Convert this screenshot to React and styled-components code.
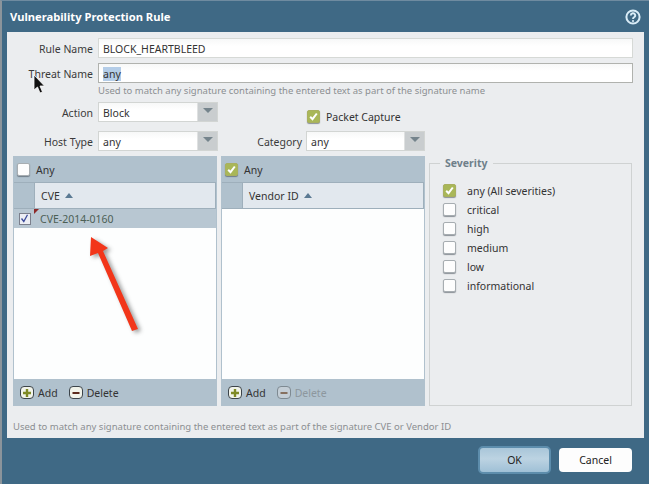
import React from "react";
import styled, { createGlobalStyle, css } from "styled-components";

const Global = createGlobalStyle`
  html, body { margin: 0; padding: 0; background: #3f6985; }
  body { width: 649px; height: 484px; overflow: hidden; font-family: Tahoma, "Noto Sans", "Open Sans", sans-serif; }
`;

const Window = styled.div`
  position: relative;
  width: 649px;
  height: 484px;
  box-sizing: border-box;
  display: flex;
  flex-direction: column;
  background: #3f6985;
  border-left: 2px solid #8b949b;
  border-top: 1px solid #6f8ba0;
  font-size: 10.5px;
  color: #333;
`;
const TitleBar = styled.header`
  height: 31px;
  flex: none;
  display: flex;
  align-items: center;
  justify-content: space-between;
  padding: 0 8px 0 8px;
  color: #fff;
  font-size: 11.2px;
  font-weight: 700;
`;
const Body = styled.main`
  flex: none;
  height: 406px;
  margin: 0 5px 0 5px;
  box-sizing: border-box;
  background: #ebedef;
  padding: 6px 11px 0 6px;
  display: flex;
  flex-direction: column;
`;
const Row = styled.div`
  display: grid;
  grid-template-columns: 80px 1fr;
  column-gap: 5px;
  align-items: center;
  margin-bottom: ${(p) => p.$mb || 0}px;
`;
const Label = styled.label`
  text-align: right;
  color: #3a3a3a;
  white-space: nowrap;
  padding-top: 1px;
`;
const Input = styled.div`
  height: 20px;
  box-sizing: border-box;
  background: linear-gradient(#f7f8f8, #fff 40%);
  border: 1px solid ${(p) => (p.$focus ? "#b0b2ae" : "#d6d9d6")};
  padding: 1px 4px 0;
  display: flex;
  align-items: center;
  color: #333;
`;
const Selected = styled.span`
  background: #b4cde8;
`;
const Hint = styled.div`
  color: #8b8f92;
  font-size: 9.5px;
  line-height: 14px;
  white-space: nowrap;
`;
const HintIndent = styled(Hint)`
  margin: 1px 0 4px 85px;
`;
const FootHint = styled(Hint)`
  margin-top: 14px;
`;
const SelectRows = styled.div`
  display: grid;
  grid-template-columns: 85px 120px 88px 119px;
  grid-template-rows: 20px 20px;
  row-gap: 9px;
  align-items: center;
`;
const SelectLabel = styled(Label)`
  grid-column: ${(p) => p.$col};
  grid-row: ${(p) => p.$row};
  padding-right: ${(p) => p.$pad || 5}px;
`;
const SelectBox = styled.div`
  grid-column: ${(p) => p.$col};
  grid-row: ${(p) => p.$row};
  height: 20px;
  box-sizing: border-box;
  display: flex;
  border: 1px solid #d2d5d3;
  background: #fff;
`;
const SelectText = styled.span`
  flex: 1;
  padding-left: 4px;
  line-height: 20px;
  background: linear-gradient(#f7f8f8, #fff 40%);
`;
const SelectBtn = styled.span`
  width: 19px;
  background: #c9cdcf;
  border-left: 1px solid #dfe1e1;
  display: flex;
  align-items: center;
  justify-content: center;
`;
const DownTri = styled.i`
  width: 0;
  height: 0;
  margin-top: -3px;
  border-left: 5px solid transparent;
  border-right: 5px solid transparent;
  border-top: 5px solid #75848c;
`;
const PacketCell = styled.div`
  grid-column: 4;
  grid-row: 1;
  display: flex;
  align-items: center;
  gap: 6px;
  padding-left: 1px;
  margin-top: 9px;
  white-space: nowrap;
`;
const Panels = styled.div`
  display: grid;
  grid-template-columns: 204px 204px 203px;
  column-gap: 4px;
  height: 250px;
  margin-top: 5px;
`;
const Panel = styled.section`
  display: flex;
  flex-direction: column;
  background: #fdfefe;
  border: 1px solid #b0c1cd;
  border-width: 0 1px;
`;
const PanelHead = styled.div`
  height: 26px;
  flex: none;
  background: #b0c1cd;
  display: flex;
  align-items: center;
  gap: 6px;
  padding-left: 3px;
  color: #333;
`;
const PanelHeadText = styled.span`
  padding-top: 2px;
`;
const GridHead = styled.div`
  height: 27px;
  flex: none;
  box-sizing: border-box;
  display: flex;
  border: 1px solid #9eafbb;
  border-left: 0;
  border-right: 1px solid #9eafbb;
  background: #e2e8ee;
`;
const GutterCell = styled.span`
  width: 20px;
  background: #b0c1cd;
  border-right: 1px solid #9eafbb;
`;
const HeadCell = styled.span`
  flex: 1;
  display: flex;
  align-items: center;
  gap: 5px;
  padding-left: 6px;
  color: #333;
`;
const UpTri = styled.i`
  width: 0;
  height: 0;
  border-left: 4.5px solid transparent;
  border-right: 4.5px solid transparent;
  border-bottom: 5px solid #5b7a93;
`;
const DataRow = styled.div`
  position: relative;
  height: 19px;
  flex: none;
  display: flex;
  align-items: center;
  background: #b8c7d2;
  color: #4c5f55;
`;
const RowCheckCell = styled.span`
  width: 21px;
  display: flex;
  align-items: center;
  justify-content: center;
`;
const RowCheck = styled.span`
  width: 12px;
  height: 12px;
  box-sizing: border-box;
  border: 1px solid #7b7f8c;
  background: #eceef4;
  display: flex;
  align-items: center;
  justify-content: center;
`;
const Flag = styled.i`
  position: absolute;
  left: 20px;
  top: 0;
  border-top: 5px solid #8d2a2a;
  border-right: 5px solid transparent;
`;
const RowText = styled.span`
  padding-left: 5px;
`;
const Spacer = styled.div`
  flex: 1;
`;
const PanelFoot = styled.div`
  height: 27px;
  flex: none;
  background: #b0c1cd;
  display: flex;
  align-items: center;
  gap: 11px;
  padding: 0 0 0 6px;
`;
const Action = styled.span`
  display: flex;
  align-items: center;
  gap: 4px;
  color: ${(p) => (p.$off ? "#8d979e" : "#333")};
`;
const ActionIcon = styled.span`
  width: 14px;
  height: 13px;
  box-sizing: border-box;
  border: 1px solid ${(p) => (p.$off ? "#7e8a92" : "#3c444a")};
  border-radius: 4px;
  background: ${(p) => (p.$off ? "#c4ced6" : "#f1f3ea")};
  display: flex;
  align-items: center;
  justify-content: center;
`;
const Fieldset = styled.fieldset`
  margin: 2px 0 0;
  padding: 12px 0 0 13px;
  border: 1px solid #cfd2d2;
  min-width: 0;
  box-sizing: border-box;
  height: 248px;
`;
const Legend = styled.legend`
  margin-left: -3px;
  padding: 0 5px;
  color: #6f7f8a;
  font-weight: 700;
  font-size: 10.5px;
  line-height: 11px;
`;
const SevRow = styled.div`
  height: 19px;
  display: flex;
  align-items: center;
  gap: 11px;
`;
const boxBase = css`
  width: 13px;
  height: 13px;
  flex: none;
  box-sizing: border-box;
  border-radius: 2px;
  display: flex;
  align-items: center;
  justify-content: center;
  box-shadow: 0 1px 1px rgba(60, 70, 80, 0.55);
`;
const Box = styled.span`
  ${boxBase}
  background: ${(p) => (p.$on ? "#a9b758" : "#fdfdfd")};
  border: 1px solid ${(p) => (p.$on ? "#a9b05f" : "#a7adb1")};
`;
const Footer = styled.footer`
  flex: 1;
  display: flex;
  align-items: center;
  justify-content: flex-end;
  gap: 8px;
  padding: 0 17px 2px 0;
`;
const OkButton = styled.button`
  width: 73px;
  height: 28px;
  padding: 0;
  border-radius: 5px;
  border: 2px solid #5d8dac;
  background: linear-gradient(#a9c6d9, #bcd3e2 45%, #9fc0d6);
  font: inherit;
  color: #222;
`;
const CancelButton = styled.button`
  width: 73px;
  height: 24px;
  padding: 0;
  border: 0;
  border-radius: 4px;
  background: #fdfdfd;
  font: inherit;
  color: #222;
`;
const ArrowSvg = styled.svg`
  position: absolute;
  left: 85px;
  top: 232px;
  overflow: visible;
  filter: drop-shadow(3px 2px 2px rgba(40, 40, 40, 0.45));
`;
const CursorSvg = styled.svg`
  position: absolute;
  left: 31px;
  top: 74px;
`;

const Check = () => (
  <svg width="9" height="9" viewBox="0 0 9 9"><path d="M1.2 4.8 L3.5 7.2 L7.8 1.5" fill="none" stroke="#fff" strokeWidth="2" /></svg>
);
const Cb = ({ on }) => <Box $on={on}>{on && <Check />}</Box>;
const Plus = () => (
  <svg width="8" height="8" viewBox="0 0 8 8"><path d="M4 0v8M0 4h8" stroke="#7f8a25" strokeWidth="2.4" /></svg>
);
const Minus = ({ off }) => (
  <svg width="8" height="8" viewBox="0 0 8 8"><path d="M0.5 4h7" stroke={off ? "#86705f" : "#5c2a1c"} strokeWidth="2" /></svg>
);

const Foot = ({ off }) => (
  <PanelFoot>
    <Action><ActionIcon><Plus /></ActionIcon>Add</Action>
    <Action $off={off}><ActionIcon $off={off}><Minus off={off} /></ActionIcon>Delete</Action>
  </PanelFoot>
);

const Select = ({ col, row, value }) => (
  <SelectBox $col={col} $row={row}>
    <SelectText>{value}</SelectText>
    <SelectBtn><DownTri /></SelectBtn>
  </SelectBox>
);

export default function App() {
  return (
    <Window>
      <Global />
      <TitleBar>
        <span>Vulnerability Protection Rule</span>
        <svg width="16" height="16" viewBox="0 0 16 16">
          <circle cx="8" cy="8" r="6.6" fill="#3f6985" stroke="#d9ecf7" strokeWidth="2" />
          <path d="M5.8 6.4a2.2 2.2 0 1 1 3.3 1.9c-.8.5-1.1.8-1.1 1.7" fill="none" stroke="#d9ecf7" strokeWidth="1.9" />
          <circle cx="8" cy="12" r="1.1" fill="#d9ecf7" />
        </svg>
      </TitleBar>
      <Body>
        <Row $mb={5}>
          <Label>Rule Name</Label>
          <Input>BLOCK_HEARTBLEED</Input>
        </Row>
        <Row>
          <Label>Threat Name</Label>
          <Input $focus><Selected>any</Selected></Input>
        </Row>
        <HintIndent>Used to match any signature containing the entered text as part of the signature name</HintIndent>
        <SelectRows>
          <SelectLabel $col={1} $row={1}>Action</SelectLabel>
          <Select col={2} row={1} value="Block" />
          <PacketCell>
            <Box $on><Check /></Box>
            Packet Capture
          </PacketCell>
          <SelectLabel $col={1} $row={2}>Host Type</SelectLabel>
          <Select col={2} row={2} value="any" />
          <SelectLabel $col={3} $row={2} $pad={4}>Category</SelectLabel>
          <Select col={4} row={2} value="any" />
        </SelectRows>
        <Panels>
          <Panel>
            <PanelHead><Cb /><PanelHeadText>Any</PanelHeadText></PanelHead>
            <GridHead>
              <GutterCell />
              <HeadCell>CVE <UpTri /></HeadCell>
            </GridHead>
            <DataRow>
              <RowCheckCell>
                <RowCheck>
                  <svg width="9" height="9" viewBox="0 0 9 9"><path d="M1.5 4.5 L3.8 7.5 L7.5 0.8" fill="none" stroke="#3b4a9a" strokeWidth="1.3" /></svg>
                </RowCheck>
              </RowCheckCell>
              <Flag />
              <RowText>CVE-2014-0160</RowText>
            </DataRow>
            <Spacer />
            <Foot />
          </Panel>
          <Panel>
            <PanelHead><Cb on /><PanelHeadText>Any</PanelHeadText></PanelHead>
            <GridHead>
              <GutterCell />
              <HeadCell>Vendor ID <UpTri /></HeadCell>
            </GridHead>
            <Spacer />
            <Foot off />
          </Panel>
          <Fieldset>
            <Legend>Severity</Legend>
            {["any (All severities)", "critical", "high", "medium", "low", "informational"].map((s, i) => (
              <SevRow key={s}><Cb on={i === 0} />{s}</SevRow>
            ))}
          </Fieldset>
        </Panels>
        <FootHint>Used to match any signature containing the entered text as part of the signature CVE or Vendor ID</FootHint>
      </Body>
      <Footer>
        <OkButton>OK</OkButton>
        <CancelButton>Cancel</CancelButton>
      </Footer>
      <ArrowSvg width="60" height="105" viewBox="0 0 60 105">
        <path d="M4 4 L21 15 L16 18 L51 96 L45 98 L11 20 L3 23 Z" fill="#f2361a" />
      </ArrowSvg>
      <CursorSvg width="14" height="20" viewBox="0 0 14 20">
        <path d="M1 0 L1 15 L4.5 12 L7 18 L9.5 17 L7 11 L11.5 11 Z" fill="#111" stroke="#fff" strokeWidth=".8" />
      </CursorSvg>
    </Window>
  );
}
